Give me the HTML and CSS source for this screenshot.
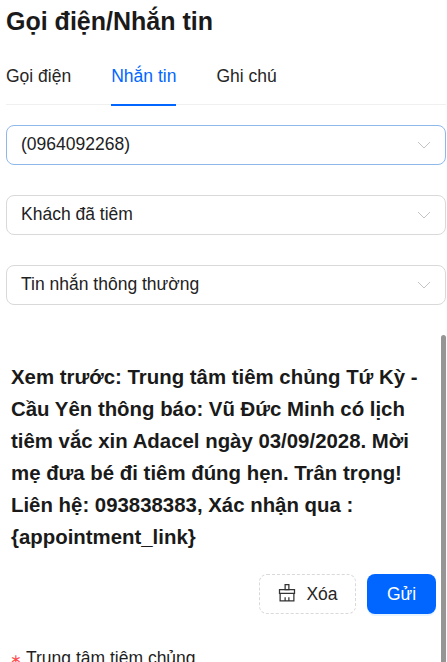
FILE: index.html
```html
<!DOCTYPE html>
<html lang="vi">
<head>
    <meta charset="UTF-8">
    <meta name="viewport" content="width=device-width, initial-scale=1.0">
    <title>Gọi điện/Nhắn tin</title>
    <link rel="stylesheet" href="styles.css">
</head>
<body>
    <div class="container">
        <h1 class="title">Gọi điện/Nhắn tin</h1>

        <div class="tabs">
            <div class="tab">Gọi điện</div>
            <div class="tab active">Nhắn tin</div>
            <div class="tab">Ghi chú</div>
        </div>

        <div class="select focused">
            <span>(0964092268)</span>
            <svg class="arrow" viewBox="0 0 14 8"><path d="M1 1l6 6 6-6"/></svg>
        </div>
        <div class="select">
            <span>Khách đã tiêm</span>
            <svg class="arrow" viewBox="0 0 14 8"><path d="M1 1l6 6 6-6"/></svg>
        </div>
        <div class="select">
            <span>Tin nhắn thông thường</span>
            <svg class="arrow" viewBox="0 0 14 8"><path d="M1 1l6 6 6-6"/></svg>
        </div>

        <div class="preview-box">
            <p class="preview">Xem trước: Trung tâm tiêm chủng Tứ Kỳ - Cầu Yên thông báo: Vũ Đức Minh có lịch tiêm vắc xin Adacel ngày 03/09/2028. Mời mẹ đưa bé đi tiêm đúng hẹn. Trân trọng! Liên hệ: 093838383, Xác nhận qua : {appointment_link}</p>

            <div class="actions">
                <button class="btn btn-clear">
                    <svg class="broom" viewBox="0 1 16 16">
                        <path d="M6.5 1.5h3v4h-3z"/>
                        <path d="M2 5.5h12v3H2z"/>
                        <path d="M2.5 8.5v6h11v-6"/>
                        <path d="M6.5 14.5v-3M9.5 14.5v-3"/>
                    </svg>
                    Xóa
                </button>
                <button class="btn btn-send">Gửi</button>
            </div>

            <div class="field-label"><span class="required">∗</span>Trung tâm tiêm chủng</div>
        </div>
    </div>
    <div class="scroll-thumb"></div>
</body>
</html>
```

FILE: styles.css
```css
html, body {
    height: 100%;
}

body {
    margin: 0;
    background: #fff;
    color: #1f1f1f;
    font-family: 'Liberation Sans', Arial, sans-serif;
    font-size: 17.5px;
    overflow: hidden;
    position: relative;
}

.container {
    padding: 5px 1px 0 6px;
}

.title {
    margin: 0;
    font-size: 25px;
    line-height: 32px;
    font-weight: bold;
    color: #1a1a1a;
}

.tabs {
    display: flex;
    gap: 40px;
    margin-top: 17px;
    height: 50px;
    border-bottom: 1px solid #f0f0f0;
    margin-bottom: 20px;
}

.tab {
    padding-top: 10px;
    height: 40px;
    line-height: 24px;
    color: #262626;
}

.tab.active {
    color: #0066ff;
    border-bottom: 2px solid #0066ff;
}

.select {
    display: flex;
    justify-content: space-between;
    align-items: center;
    height: 40px;
    box-sizing: border-box;
    padding: 0 14px 1px;
    margin-bottom: 30px;
    border: 1px solid #d9d9d9;
    border-radius: 8px;
    color: #222;
}

.select.focused {
    border-color: #8fb8ea;
}

.arrow {
    width: 14px;
    height: 8px;
    fill: none;
    stroke: #c4c4c4;
    stroke-width: 1;
}

.preview-box {
    padding: 0 10px 0 5px;
    margin-top: 56px;
}

.preview {
    margin: 0;
    font-size: 20.4px;
    line-height: 32px;
    font-weight: bold;
    color: #1a1a1a;
}

.actions {
    display: flex;
    justify-content: flex-end;
    gap: 11px;
    margin-top: 21px;
}

.btn {
    display: flex;
    align-items: center;
    justify-content: center;
    height: 40px;
    border-radius: 8px;
    font-family: inherit;
    font-size: 17.5px;
    cursor: pointer;
}

.btn-clear {
    width: 97px;
    gap: 9px;
    background: #fff;
    color: #262626;
    border: 1px dashed #d9d9d9;
}

.btn-send {
    width: 69px;
    background: #0066ff;
    color: #fff;
    border: none;
    box-shadow: 0 2px 0 rgba(5, 145, 255, 0.1);
}

.broom {
    width: 20px;
    height: 20px;
    fill: none;
    stroke: #333;
    stroke-width: 1;
}

.field-label {
    display: flex;
    align-items: baseline;
    margin-top: 33px;
    margin-left: -1px;
    line-height: 22px;
    color: #1f1f1f;
}

.required {
    color: #ff4d4f;
    font-size: 14px;
    margin-right: 4px;
}

.scroll-thumb {
    position: absolute;
    top: 335px;
    bottom: -10px;
    right: 1px;
    width: 5px;
    border-radius: 3px;
    background: #959595;
}
```
